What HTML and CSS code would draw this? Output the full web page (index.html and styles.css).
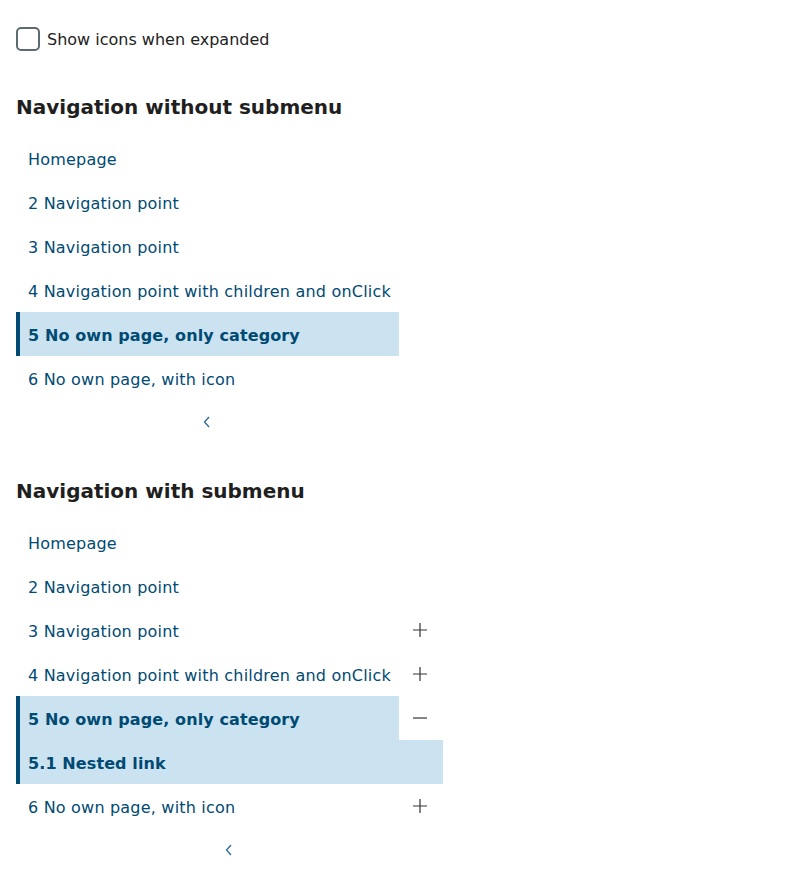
FILE: index.html
```html
<!DOCTYPE html>
<html lang="en">
<head>
<meta charset="utf-8">
<title>Navigation</title>
<link rel="stylesheet" href="styles.css">
</head>
<body>
<div class="page">
  <label class="check-row">
    <span class="check-box"></span>
    <span class="check-label">Show icons when expanded</span>
  </label>

  <section class="section">
    <h2 class="title">Navigation without submenu</h2>
    <nav class="nav">
      <ul class="nav-list">
        <li class="nav-row"><a class="nav-link">Homepage</a></li>
        <li class="nav-row"><a class="nav-link">2 Navigation point</a></li>
        <li class="nav-row"><a class="nav-link">3 Navigation point</a></li>
        <li class="nav-row"><a class="nav-link">4 Navigation point with children and onClick</a></li>
        <li class="nav-row"><a class="nav-link is-active">5 No own page, only category</a></li>
        <li class="nav-row"><a class="nav-link">6 No own page, with icon</a></li>
      </ul>
      <button class="collapse-btn" type="button" aria-label="Collapse">
        <svg width="8" height="12" viewBox="0 0 8 12"><path d="M6 1 L1.5 6 L6 11" fill="none" stroke="#2a6a98" stroke-width="1.3"/></svg>
      </button>
    </nav>
  </section>

  <section class="section">
    <h2 class="title">Navigation with submenu</h2>
    <nav class="nav">
      <ul class="nav-list">
        <li class="nav-row"><a class="nav-link">Homepage</a><span class="toggle-space"></span></li>
        <li class="nav-row"><a class="nav-link">2 Navigation point</a><span class="toggle-space"></span></li>
        <li class="nav-row"><a class="nav-link">3 Navigation point</a>
          <button class="toggle" type="button" aria-label="Expand">
            <svg width="16" height="16" viewBox="0 0 16 16"><path d="M1 8 H15 M8 1 V15" stroke="#333" stroke-width="1.2"/></svg>
          </button>
        </li>
        <li class="nav-row"><a class="nav-link">4 Navigation point with children and onClick</a>
          <button class="toggle" type="button" aria-label="Expand">
            <svg width="16" height="16" viewBox="0 0 16 16"><path d="M1 8 H15 M8 1 V15" stroke="#333" stroke-width="1.2"/></svg>
          </button>
        </li>
        <li class="nav-row"><a class="nav-link is-active">5 No own page, only category</a>
          <button class="toggle" type="button" aria-label="Collapse">
            <svg width="16" height="16" viewBox="0 0 16 16"><path d="M1 8 H15" stroke="#333" stroke-width="1.2"/></svg>
          </button>
        </li>
        <li class="nav-row"><a class="nav-link is-active nested">5.1 Nested link</a></li>
        <li class="nav-row"><a class="nav-link">6 No own page, with icon</a>
          <button class="toggle" type="button" aria-label="Expand">
            <svg width="16" height="16" viewBox="0 0 16 16"><path d="M1 8 H15 M8 1 V15" stroke="#333" stroke-width="1.2"/></svg>
          </button>
        </li>
      </ul>
      <button class="collapse-btn" type="button" aria-label="Collapse">
        <svg width="8" height="12" viewBox="0 0 8 12"><path d="M6 1 L1.5 6 L6 11" fill="none" stroke="#2a6a98" stroke-width="1.3"/></svg>
      </button>
    </nav>
  </section>
</div>
</body>
</html>
```

FILE: styles.css
```css
* { box-sizing: border-box; }

html, body {
  margin: 0;
  padding: 0;
  background: #ffffff;
}

body {
  font-family: "DejaVu Sans", Verdana, sans-serif;
  font-size: 16px;
  color: #222222;
}

.page {
  padding: 16px;
}

.check-row {
  display: flex;
  align-items: center;
  gap: 7px;
  height: 46px;
}

.check-box {
  width: 24px;
  height: 24px;
  border: 2px solid #5b6b70;
  border-radius: 5px;
  background: #fff;
  flex: none;
}

.check-label {
  font-size: 16px;
  color: #222;
}

.section {
  margin-top: 33px;
}

.section + .section {
  margin-top: 35px;
}

.title {
  margin: 0 0 17px 0;
  font-size: 20px;
  line-height: 24px;
  font-weight: bold;
  color: #1f1f1f;
}

.nav {
  display: inline-flex;
  flex-direction: column;
}

.nav-list {
  list-style: none;
  margin: 0;
  padding: 0;
}

.nav-row {
  display: flex;
  align-items: stretch;
  height: 44px;
}

.nav-link {
  flex: 1;
  display: flex;
  align-items: center;
  padding: 2px 8px 0 8px;
  border-left: 4px solid transparent;
  color: #004a73;
  white-space: nowrap;
  letter-spacing: 0.2px;
  cursor: pointer;
}

.nav-link.is-active {
  background: #cbe3f0;
  border-left-color: #004a73;
  font-weight: bold;
  letter-spacing: 0.1px;
}

.toggle,
.toggle-space {
  width: 44px;
  height: 44px;
  flex: none;
}

.toggle {
  border: 0;
  padding: 0;
  background: transparent;
  display: flex;
  align-items: center;
  justify-content: center;
  cursor: pointer;
}

.toggle svg { display: block; margin-left: -1px; }

.collapse-btn {
  align-self: center;
  width: 44px;
  height: 44px;
  border: 0;
  padding: 0;
  background: transparent;
  display: flex;
  align-items: center;
  justify-content: center;
  cursor: pointer;
}

.collapse-btn svg { display: block; }
```
